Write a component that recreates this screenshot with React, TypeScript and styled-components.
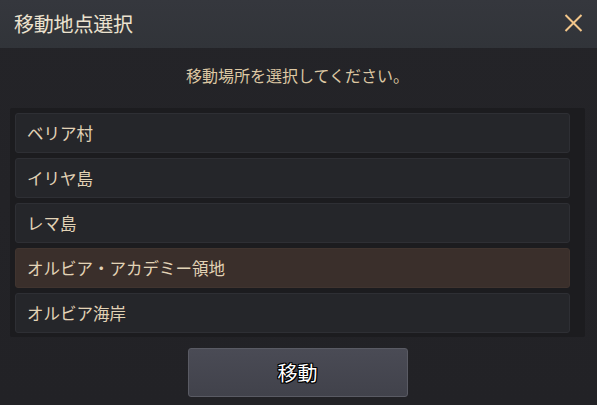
import React, { useState } from "react";
import styled, { createGlobalStyle } from "styled-components";

const Global = createGlobalStyle`
  html, body { margin: 0; padding: 0; background: #232327; }
  body { font-family: "Noto Sans CJK JP", "Noto Sans", sans-serif; }
  * { box-sizing: border-box; }
`;

const Dialog = styled.div`
  width: 597px;
  height: 405px;
  display: flex;
  flex-direction: column;
  background: linear-gradient(180deg, #242428 0%, #222226 100%);
  overflow: hidden;
`;

const Header = styled.div`
  height: 48px;
  flex: none;
  display: flex;
  align-items: center;
  justify-content: space-between;
  padding: 0 13px 2px 14px;
  background: linear-gradient(180deg, #35373d 0%, #313439 100%);
`;

const Title = styled.h1`
  margin: 0;
  font-size: 20px;
  font-weight: 400;
  color: #ece2cf;
  letter-spacing: -0.2px;
`;

const CloseButton = styled.button`
  width: 22px;
  height: 22px;
  padding: 0;
  border: none;
  background: transparent;
  display: flex;
  align-items: center;
  justify-content: center;
  cursor: pointer;
`;

const Body = styled.div`
  flex: 1;
  display: flex;
  flex-direction: column;
  align-items: center;
  padding: 16px 12px 8px 10px;
`;

const Prompt = styled.p`
  margin: 0;
  height: 22px;
  font-size: 16px;
  line-height: 22px;
  color: #dcc7a3;
`;

const List = styled.ul`
  list-style: none;
  margin: 22px 0 0;
  align-self: stretch;
  display: flex;
  flex-direction: column;
  gap: 5px;
  padding: 5px 15px 4px 5px;
  background: #1c1c1f;
  border-radius: 2px;
`;

const Item = styled.li<{ $selected: boolean }>`
  height: 40px;
  display: flex;
  align-items: center;
  padding-left: 11px;
  font-size: 16.5px;
  color: #e2d3b6;
  border-radius: 3px;
  border: 1px solid ${(p) => (p.$selected ? "#40342f" : "#2e2f34")};
  background: ${(p) => (p.$selected ? "#3a2f2b" : "#25262a")};
  cursor: pointer;
`;

const MoveButton = styled.button`
  margin-top: 11px;
  width: 220px;
  height: 49px;
  border-radius: 3px;
  border: 1px solid #5a5b64;
  background: linear-gradient(180deg, #4a4b55 0%, #41424b 100%);
  font-family: "Noto Sans CJK JP", "Noto Sans", sans-serif;
  font-size: 20px;
  color: #ffffff;
  text-shadow: 1px 0 0 #000, -1px 0 0 #000, 0 1px 0 #000, 0 -1px 0 #000,
    1px 1px 0 #000, -1px -1px 0 #000, 1px -1px 0 #000, -1px 1px 0 #000;
  cursor: pointer;
`;

const places = [
  "ベリア村",
  "イリヤ島",
  "レマ島",
  "オルビア・アカデミー領地",
  "オルビア海岸",
];

export default function App() {
  const [selected, setSelected] = useState(3);
  return (
    <>
      <Global />
      <Dialog>
        <Header>
          <Title>移動地点選択</Title>
          <CloseButton aria-label="close">
            <svg width="19" height="18" viewBox="0 0 19 18">
              <path d="M1.5 1 L17.5 17 M17.5 1 L1.5 17" stroke="#f3c68a" strokeWidth="2" fill="none" />
            </svg>
          </CloseButton>
        </Header>
        <Body>
          <Prompt>移動場所を選択してください。</Prompt>
          <List>
            {places.map((p, i) => (
              <Item key={p} $selected={i === selected} onClick={() => setSelected(i)}>
                {p}
              </Item>
            ))}
          </List>
          <MoveButton>移動</MoveButton>
        </Body>
      </Dialog>
    </>
  );
}
